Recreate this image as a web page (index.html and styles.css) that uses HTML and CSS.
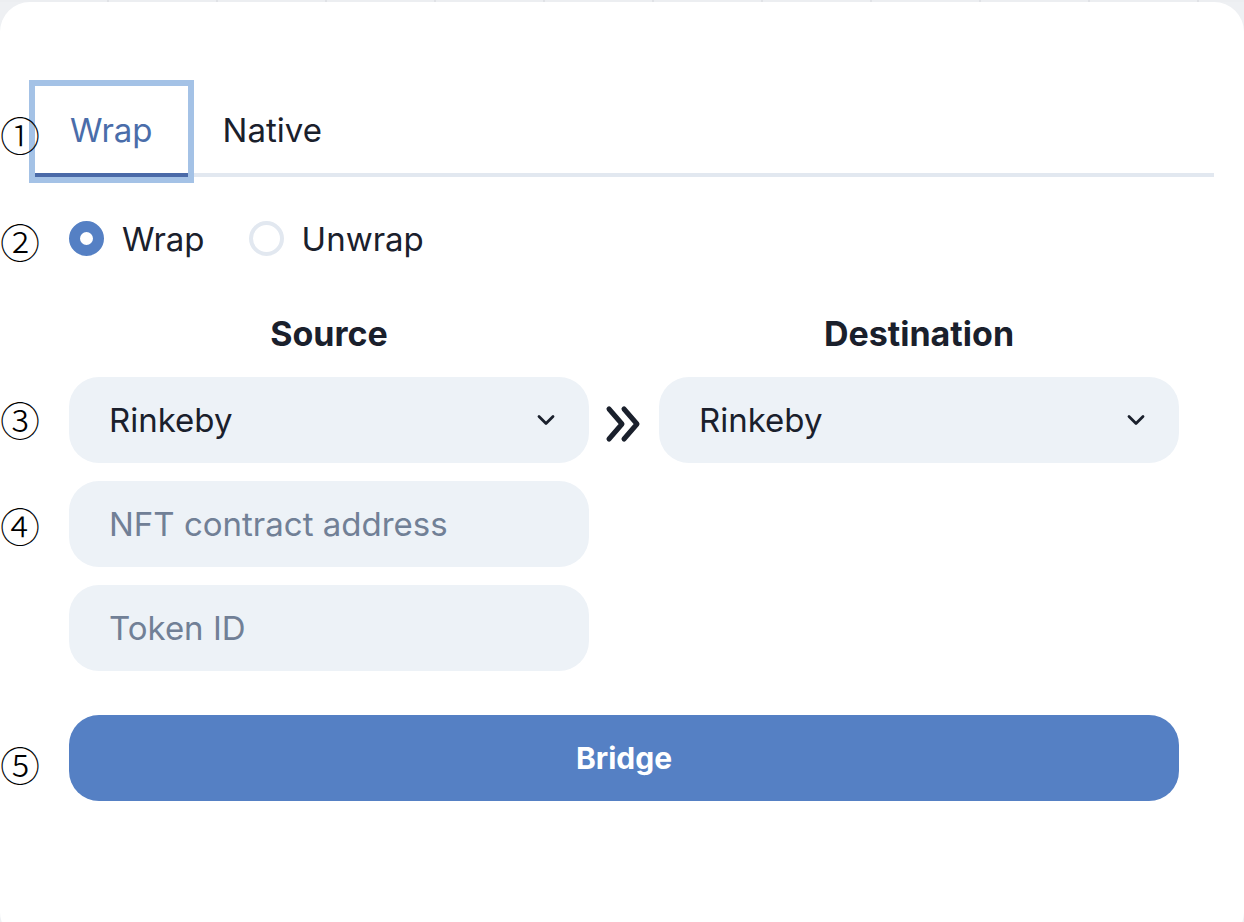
FILE: index.html
```html
<!DOCTYPE html>
<html>
<head>
<meta charset="utf-8">
<link rel="stylesheet" href="styles.css">
</head>
<body>
<div class="topstrip"></div>
<div class="card">
  <span class="mark m1">①</span>
  <span class="mark m2">②</span>
  <span class="mark m3">③</span>
  <span class="mark m4">④</span>
  <span class="mark m5">⑤</span>
  <div class="tabs">
    <div class="tablist">
      <div class="tab active">Wrap</div>
      <div class="tab">Native</div>
    </div>
    <div class="panel">
      <div class="radios">
        <label class="radio"><span class="dot checked"></span><span>Wrap</span></label>
        <label class="radio"><span class="dot"></span><span>Unwrap</span></label>
      </div>
      <div class="grid">
        <div class="heading">Source</div>
        <div></div>
        <div class="heading">Destination</div>

        <div class="field select"><span>Rinkeby</span>
          <svg class="chev" width="18" height="12" viewBox="0 0 18 12"><path d="M2 2.5 L9 9.5 L16 2.5" fill="none" stroke="#1a202c" stroke-width="2.8" stroke-linecap="round" stroke-linejoin="round"/></svg>
        </div>
        <div class="arrows">
          <svg width="38" height="38" viewBox="0 0 38 38"><path d="M4 4 L17 19 L4 34 M19 4 L32 19 L19 34" fill="none" stroke="#1a202c" stroke-width="5" stroke-linecap="round" stroke-linejoin="round"/></svg>
        </div>
        <div class="field select"><span>Rinkeby</span>
          <svg class="chev" width="18" height="12" viewBox="0 0 18 12"><path d="M2 2.5 L9 9.5 L16 2.5" fill="none" stroke="#1a202c" stroke-width="2.8" stroke-linecap="round" stroke-linejoin="round"/></svg>
        </div>

        <div class="field placeholder">NFT contract address</div>
        <div></div><div></div>
        <div class="field placeholder">Token ID</div>
        <div></div><div></div>
      </div>
      <div class="bridge">Bridge</div>
    </div>
  </div>
</div>
</body>
</html>
```

FILE: styles.css
```css
html, body {
  margin: 0;
  padding: 0;
}
body {
  background: #eef0f3;
  width: 1244px;
  height: 922px;
  overflow: hidden;
  font-family: Inter, "Noto Sans", sans-serif;
  color: #1a202c;
}
.topstrip {
  height: 2px;
  background: repeating-linear-gradient(90deg, #eceef1 0, #eceef1 107px, #e0e2e6 107px, #e0e2e6 109px);
}
.card {
  position: relative;
  background: #fff;
  border-radius: 30px;
  height: 940px;
  box-sizing: border-box;
  padding: 84px 30px 0 35px;
}
.mark {
  position: absolute;
  left: 0;
  width: 40px;
  text-align: center;
  font-family: "Noto Sans CJK JP", sans-serif;
  font-size: 40px;
  line-height: 44px;
  font-weight: 300;
  color: #000;
}
.m1 { top: 110px; }
.m2 { top: 217px; }
.m3 { top: 395px; }
.m4 { top: 501px; }
.m5 { top: 740px; }

.tablist {
  display: flex;
  border-bottom: 4px solid #e2e8f0;
  width: 1179px;
}
.tab {
  padding: 0 35px;
  height: 87px;
  line-height: 89px;
  font-size: 33px;
  border-bottom: 4px solid transparent;
  margin-bottom: -4px;
  color: #1a202c;
}
.tab.active {
  color: #4a6daa;
  border-bottom-color: #4a6aa8;
  outline: 6px solid #a4c2e6;
}
.panel {
  padding: 36px 34px 0;
}
.radios {
  display: flex;
  gap: 44px;
  height: 51px;
  align-items: center;
  font-size: 33px;
}
.radio {
  display: flex;
  align-items: center;
  gap: 18px;
}
.dot {
  width: 35px;
  height: 35px;
  border-radius: 50%;
  box-sizing: border-box;
  border: 4px solid #e2e8f0;
  background: #fff;
}
.dot.checked {
  border: 11px solid #5580c4;
  background: #fff;
}
.grid {
  margin-top: 44px;
  display: grid;
  grid-template-columns: 520px 70px 520px;
  row-gap: 18px;
}
.heading {
  text-align: center;
  font-weight: 700;
  font-size: 34px;
  line-height: 52px;
  margin-bottom: -1px;
}
.field {
  height: 86px;
  border-radius: 30px;
  background: #edf2f7;
  display: flex;
  align-items: center;
  padding: 0 34px 0 40px;
  font-size: 33px;
}
.select {
  justify-content: space-between;
}
.placeholder {
  color: #718096;
}
.arrows {
  display: flex;
  align-items: center;
  justify-content: center;
  padding-top: 8px;
}
.bridge {
  margin-top: 44px;
  height: 86px;
  border-radius: 30px;
  background: #5580c4;
  color: #fff;
  font-weight: 700;
  font-size: 30px;
  display: flex;
  align-items: center;
  justify-content: center;
  width: 1110px;
}
```
